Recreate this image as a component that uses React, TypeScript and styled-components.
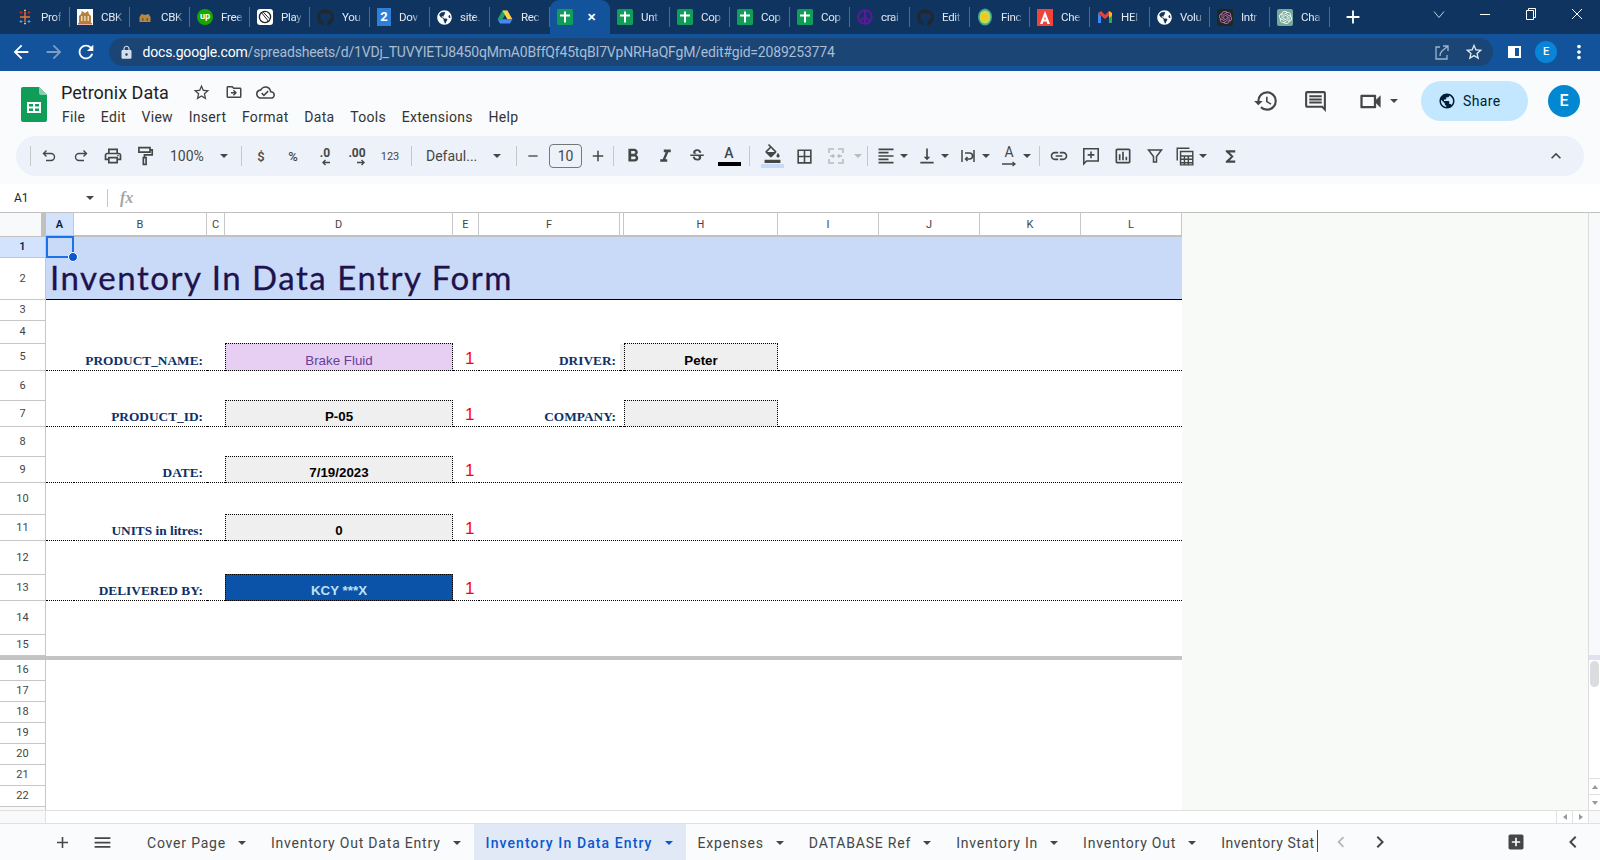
import React from 'react';
import styled, { createGlobalStyle } from 'styled-components';
import {
  MdAdd, MdAddBox, MdArrowBack, MdArrowForward, MdBorderAll, MdChevronLeft, MdChevronRight, MdExpandLess,
  MdFormatAlignLeft, MdFormatBold, MdFormatColorFill, MdFormatItalic, MdFunctions, MdHistory, MdLink, MdLock,
  MdMenu, MdMoreVert, MdOutlineCloudDone, MdOutlineComment,
  MdOutlineDriveFileMove, MdOutlineInsertChart, MdOutlinePrint,
  MdOutlineVideocam, MdPublic, MdRefresh, MdRemove, MdStarBorder, MdStrikethroughS,
  MdVerticalAlignBottom,
} from 'react-icons/md';
import { FaGithub, FaGlobeAmericas, FaPeace } from 'react-icons/fa';
import { SiOpenai } from 'react-icons/si';

const GlobalStyle = createGlobalStyle`
  html, body { margin: 0; padding: 0; overflow: hidden; background: #fff; }
  * { box-sizing: border-box; }
  body { font-family: Roboto, "Liberation Sans", sans-serif; }
`;

const browserTabs = [
  ['tableau', 'Prof'], ['crest', 'CBK'], ['crestDark', 'CBK'], ['upwork', 'Free'], ['play', 'Play'], ['github', 'You'],
  ['doc2', 'Dov'], ['globe', 'site.'], ['drive', 'Rec'], ['sheets', ''], ['sheets', 'Unt'], ['sheets', 'Cop'],
  ['sheets', 'Cop'], ['sheets', 'Cop'], ['peace', 'crai'], ['github', 'Edit'], ['find', 'Finc'], ['adobe', 'Che'],
  ['gmail', 'HEl'], ['globe', 'Volu'], ['aiDark', 'Intr'], ['aiTeal', 'Cha'],
];

const Favicon = ({ kind }: { kind: string }) => {
  switch (kind) {
    case 'tableau':
      return (
        <svg width="16" height="16" viewBox="0 0 16 16">
          <path d="M8 3v10M3 8h10" stroke="#e8762d" strokeWidth="1.400" />
          <path d="M4 2v3M2.500 3.500h3M12 2v3M10.500 3.500h3" stroke="#c72035" strokeWidth="1" />
          <path d="M4 11v3M2.500 12.500h3M12 11v3M10.500 12.500h3" stroke="#5b9bd5" strokeWidth="1" />
          <path d="M8 .5v2M7 1.500h2M8 13.500v2M7 14.500h2" stroke="#e9c46a" strokeWidth="1" />
        </svg>
      );
    case 'crest':
      return (
        <svg width="16" height="16" viewBox="0 0 16 16">
          <rect width="16" height="16" fill="#fff" />
          <path d="M2 14V7l2-2 1-3 3 2 3-2 1 3 2 2v7z" fill="#b5813f" />
          <path d="M4 7h1.500v5H4zM7.200 7h1.500v5H7.200zM10.500 7H12v5h-1.500z" fill="#e9d6b0" />
          <path d="M1 14h14v1.500H1z" fill="#d9342b" opacity=".8" />
        </svg>
      );
    case 'crestDark':
      return (
        <svg width="16" height="16" viewBox="0 0 16 16">
          <path d="M2.500 13V8l2-3 3.500 1 3.500-1 2 3v5z" fill="#b58a45" />
          <path d="M5 9h1.500v3H5zM9.500 9H11v3H9.500z" fill="#7c5a26" />
        </svg>
      );
    case 'upwork':
      return <UpBadge>up</UpBadge>;
    case 'play':
      return (
        <svg width="16" height="16" viewBox="0 0 16 16">
          <rect width="16" height="16" rx="3" fill="#fff" />
          <circle cx="8" cy="8" r="5.600" fill="none" stroke="#222" strokeWidth="1.300" />
          <path d="M4 3l8 10M6 2.800l6.500 7" stroke="#222" strokeWidth="1" />
        </svg>
      );
    case 'github':
      return <FaGithub size={17} color="#22272e" />;
    case 'doc2':
      return <DocBadge>2</DocBadge>;
    case 'globe':
      return <FaGlobeAmericas size={15} color="#fff" />;
    case 'drive':
      return (
        <svg width="16" height="16" viewBox="0 0 16 16">
          <path d="M5.500 1.500h5l-5 8.700H.6z" fill="#1fa463" />
          <path d="M10.500 1.500l4.900 8.700h-5L5.500 1.500z" fill="#ffd04b" />
          <path d="M.6 10.200h14.800L13 14.500H3z" fill="#4688f1" />
        </svg>
      );
    case 'sheets':
      return (
        <svg width="16" height="16" viewBox="0 0 16 16">
          <rect width="16" height="16" rx="1.500" fill="#0f9d58" />
          <path d="M7 2.500h2v3h4v2H9v6H7v-6H3v-2h4z" fill="#fff" />
        </svg>
      );
    case 'peace':
      return <FaPeace size={16} color="#5a189a" />;
    case 'find':
      return (
        <svg width="16" height="18" viewBox="0 0 16 18">
          <ellipse cx="8" cy="9" rx="7" ry="8.600" fill="#3fa796" />
          <ellipse cx="8" cy="9" rx="5.400" ry="6.600" fill="#c8d94a" />
          <circle cx="8" cy="9" r="3.200" fill="#f5c518" />
        </svg>
      );
    case 'adobe':
      return (
        <svg width="16" height="17" viewBox="0 0 16 17">
          <rect width="16" height="17" fill="#f0443a" />
          <path d="M8 2l5 13h-2.600l-.9-2.600H6.400L5.600 15H3zM7.100 10.400h1.800L8 7.600z" fill="#fff" />
        </svg>
      );
    case 'gmail':
      return (
        <svg width="16" height="14" viewBox="0 0 16 14">
          <path d="M1 3v10h3V6z" fill="#4285f4" />
          <path d="M15 3v10h-3V6z" fill="#34a853" />
          <path d="M1 3l3-2 4 4 4-4 3 2-7 6z" fill="#ea4335" />
          <path d="M12 1l3 2v3l-3 2z" fill="#fbbc05" />
        </svg>
      );
    case 'aiDark':
      return (
        <AiBadge $bg="#1b2a1e">
          <SiOpenai size={13} color="#c76fbf" />
        </AiBadge>
      );
    default:
      return (
        <AiBadge $bg="#74aa9c">
          <SiOpenai size={13} color="#fff" />
        </AiBadge>
      );
  }
};

const GridIcon = () => (
  <svg width="26" height="35" viewBox="0 0 26 35">
    <path d="M2 0h16l8 8v25a2 2 0 0 1-2 2H2a2 2 0 0 1-2-2V2a2 2 0 0 1 2-2z" fill="#0f9d58" />
    <path d="M18 0l8 8h-6a2 2 0 0 1-2-2z" fill="#87ceac" />
    <path d="M6 15h14v11H6zM8 17v2.500h4V17zm6 0v2.500h4V17zm-6 4.500V24h4v-2.500zm6 0V24h4v-2.500z" fill="#fff" fillRule="evenodd" />
  </svg>
);

const StrokeIcon = ({ size = 18, width = 1.500, color = '#444746', d }: { size?: number; width?: number; color?: string; d: string }) => (
  <svg width={size} height={size} viewBox="0 0 18 18" fill="none" stroke={color} strokeWidth={width}>
    <path d={d} />
  </svg>
);

const rowHeights = [21, 42, 21, 23, 27, 30, 26, 30, 26, 32, 26, 34, 26, 34, 21];
const lowerRows = [16, 17, 18, 19, 20, 21, 22];

type Tone = 'plain' | 'lilac' | 'blue';
type FormRow = {
  label: string;
  value: string;
  tone: Tone;
  side?: { label: string; value: string };
};

const formRows: Record<number, FormRow> = {
  5: { label: 'PRODUCT_NAME:', value: 'Brake Fluid', tone: 'lilac', side: { label: 'DRIVER:', value: 'Peter' } },
  7: { label: 'PRODUCT_ID:', value: 'P-05', tone: 'plain', side: { label: 'COMPANY:', value: '' } },
  9: { label: 'DATE:', value: '7/19/2023', tone: 'plain' },
  11: { label: 'UNITS in litres:', value: '0', tone: 'plain' },
  13: { label: 'DELIVERED BY:', value: 'KCY ***X', tone: 'blue' },
};

const columns = ['A', 'B', 'C', 'D', 'E', 'F', '', 'H', 'I', 'J', 'K', 'L'];
const sheetTabs = ['Cover Page', 'Inventory Out Data Entry', 'Inventory In Data Entry', 'Expenses', 'DATABASE Ref', 'Inventory In', 'Inventory Out'];

const App = () => {
  const renderRow = (n: number) => {
    const form = formRows[n];
    const selected = n === 1;
    return (
      <React.Fragment key={n}>
        <RowNum $active={selected}>{n}</RowNum>
        {n === 1 && (
          <>
            <Blank $fill="#c9daf8">
              <Selection>
                <Handle />
              </Selection>
            </Blank>
            <Blank $span={11} $fill="#c9daf8" />
          </>
        )}
        {n === 2 && <TitleCell>Inventory In Data Entry Form</TitleCell>}
        {form ? (
          <>
            <Blank $ruled />
            <LabelCell>{form.label}</LabelCell>
            <Blank $ruled />
            <ValueCell $tone={form.tone}>{form.value}</ValueCell>
            <FlagCell>1</FlagCell>
            {form.side ? (
              <>
                <LabelCell>{form.side.label}</LabelCell>
                <Blank $ruled $fill={n === 5 ? '#efefef' : undefined} />
                <ValueCell $tone="plain">{form.side.value}</ValueCell>
                <Blank $span={4} $ruled />
              </>
            ) : (
              <Blank $span={7} $ruled />
            )}
          </>
        ) : (
          n > 2 && <Blank $span={12} />
        )}
      </React.Fragment>
    );
  };

  return (
    <Page>
      <GlobalStyle />
      <TabStrip>
        {browserTabs.map(([kind, title], i) => (
          <BrowserTab key={i} $active={i === 9}>
            <Favicon kind={kind} />
            {i === 9 ? <TabClose>✕</TabClose> : <TabTitle>{title}</TabTitle>}
          </BrowserTab>
        ))}
        <NewTab>
          <MdAdd size={22} />
        </NewTab>
        <WindowControls>
          <WindowBtn>
            <svg width="12" height="12" viewBox="0 0 12 12"><path d="M1 3.500l5 6 5-6" fill="none" stroke="#c5d3e4" /></svg>
          </WindowBtn>
          <WindowBtn>
            <svg width="12" height="12" viewBox="0 0 12 12"><path d="M1 6.500h10" stroke="#fff" /></svg>
          </WindowBtn>
          <WindowBtn>
            <svg width="12" height="14" viewBox="0 0 12 14"><path d="M1.500 3.500h7v9h-7zM3.500 3.500v-2h7v9h-2" fill="none" stroke="#fff" /></svg>
          </WindowBtn>
          <WindowBtn>
            <svg width="12" height="12" viewBox="0 0 12 12"><path d="M1 1l10 10M11 1L1 11" stroke="#fff" /></svg>
          </WindowBtn>
        </WindowControls>
      </TabStrip>

      <AddressBar>
        <NavBtn><MdArrowBack size={22} color="#fff" /></NavBtn>
        <NavBtn><MdArrowForward size={22} color="#7f9cc2" /></NavBtn>
        <NavBtn><MdRefresh size={22} color="#fff" /></NavBtn>
        <Omnibox>
          <MdLock size={15} color="#d5dfea" />
          <UrlText>
            <b>docs.google.com</b>/spreadsheets/d/1VDj_TUVYIETJ8450qMmA0BffQf45tqBI7VpNRHaQFgM/edit#gid=2089253774
          </UrlText>
          <OmniIcons>
            <svg width="18" height="18" viewBox="0 0 18 18">
              <path d="M10 3h5v5M15 3l-6 5c-1.500 1.300-2 3-2 5M7 4H3v12h11v-4" fill="none" stroke="#9fb4cc" strokeWidth="1.300" />
            </svg>
            <MdStarBorder size={20} color="#dfe7f0" />
          </OmniIcons>
        </Omnibox>
        <PanelIcon />
        <MiniAvatar>E</MiniAvatar>
        <NavDots><MdMoreVert size={22} color="#fff" /></NavDots>
      </AddressBar>

      <SheetHeader>
        <LogoSlot><GridIcon /></LogoSlot>
        <TitleBlock>
          <TitleRow>
            <DocTitle>Petronix Data</DocTitle>
            <TitleIcon $first><MdStarBorder size={19} /></TitleIcon>
            <TitleIcon><MdOutlineDriveFileMove size={18} /></TitleIcon>
            <TitleIcon><MdOutlineCloudDone size={19} /></TitleIcon>
          </TitleRow>
          <MenuRow>
            {['File', 'Edit', 'View', 'Insert', 'Format', 'Data', 'Tools', 'Extensions', 'Help'].map((m) => (
              <span key={m}>{m}</span>
            ))}
          </MenuRow>
        </TitleBlock>
        <HeaderActions>
          <ActionIcon $w={34}><MdHistory size={26} /></ActionIcon>
          <ActionIcon $w={34} $ml={15}><MdOutlineComment size={25} /></ActionIcon>
          <ActionIcon $w={28} $ml={24}><MdOutlineVideocam size={27} /></ActionIcon>
          <SmallCaret $ml={6} />
          <ShareButton><MdPublic size={18} color="#001d35" />Share</ShareButton>
          <Avatar>E</Avatar>
        </HeaderActions>
      </SheetHeader>

      <ToolbarWrap>
        <Toolbar>
          <Sep $mr={2} />
          <ToolBtn><StrokeIcon d="M6.500 3.500L3.500 6.500l3 3M4 6.500h7a3.500 3.500 0 0 1 0 7H6" width={1.400} /></ToolBtn>
          <ToolBtn><StrokeIcon d="M11.500 3.500l3 3-3 3M14 6.500H7a3.500 3.500 0 0 0 0 7h5" width={1.400} /></ToolBtn>
          <ToolBtn><MdOutlinePrint size={20} /></ToolBtn>
          <ToolBtn><StrokeIcon size={20} d="M3.500 1.500h10v4h-10zM13.500 3.500h2v4.500H8.500v2.500M7.500 10.500h2.500v6H7.500z" /></ToolBtn>
          <ToolText $w={52}>100%</ToolText>
          <Caret $w={22} />
          <Sep $ml={6} $mr={3} />
          <ToolBtn><SymbolText>$</SymbolText></ToolBtn>
          <ToolBtn><SymbolText>%</SymbolText></ToolBtn>
          <ToolBtn>
            <DecimalIcon>.0<svg width="9" height="7" viewBox="0 0 9 7"><path d="M9 3.500H2M4.500 1L2 3.500 4.500 6" fill="none" stroke="#444746" strokeWidth="1.400" /></svg></DecimalIcon>
          </ToolBtn>
          <ToolBtn>
            <DecimalIcon>.00<svg width="9" height="7" viewBox="0 0 9 7"><path d="M0 3.500h7M4.500 1L7 3.500 4.500 6" fill="none" stroke="#444746" strokeWidth="1.400" /></svg></DecimalIcon>
          </ToolBtn>
          <ToolBtn $w={34}><SymbolText $small>123</SymbolText></ToolBtn>
          <Sep $ml={4} />
          <FontLabel>Defaul...</FontLabel>
          <Caret $w={20} />
          <Sep $ml={9} />
          <ToolBtn><MdRemove size={16} /></ToolBtn>
          <SizeBox>10</SizeBox>
          <ToolBtn $w={31}><MdAdd size={18} /></ToolBtn>
          <Sep $mr={3} />
          <ToolBtn><MdFormatBold size={22} /></ToolBtn>
          <ToolBtn><MdFormatItalic size={21} /></ToolBtn>
          <ToolBtn><MdStrikethroughS size={18} /></ToolBtn>
          <ToolBtn>
            <ColorStack><TextA>A</TextA><ColorBar $color="#000" /></ColorStack>
          </ToolBtn>
          <Sep $ml={4} $mr={6} />
          <ToolBtn>
            <ColorStack><MdFormatColorFill size={19} /><ColorBar $color="#c9daf8" /></ColorStack>
          </ToolBtn>
          <ToolBtn><MdBorderAll size={19} /></ToolBtn>
          <ToolBtn>
            <StrokeIcon color="#b8babc" d="M7 2H2v4M11 2h5v4M7 16H2v-4M11 16h5v-4M3 9h4M15 9h-4M5.500 7.500L7 9l-1.500 1.500M12.500 7.500L11 9l1.500 1.500" />
          </ToolBtn>
          <Caret $w={12} $dim />
          <Sep $ml={3} $mr={4} />
          <ToolBtn $w={28}><MdFormatAlignLeft size={20} /></ToolBtn>
          <Caret $w={8} />
          <ToolBtn $w={28} $ml={5}><MdVerticalAlignBottom size={20} /></ToolBtn>
          <Caret $w={8} />
          <ToolBtn $w={28} $ml={5}>
            <StrokeIcon d="M3 3v12M15 3v12M6 6h4.500a2.500 2.500 0 0 1 0 6H7M8.500 10L6.500 12l2 2" />
          </ToolBtn>
          <Caret $w={8} />
          <ToolBtn $w={28} $ml={5}>
            <ColorStack><TextA $thin>A</TextA>
              <svg width="16" height="6" viewBox="0 0 16 6"><path d="M1 3h13M11.500 1L14 3l-2.500 2" fill="none" stroke="#444746" strokeWidth="1.300" /></svg>
            </ColorStack>
          </ToolBtn>
          <Caret $w={8} />
          <Sep $ml={8} $mr={3} />
          <ToolBtn><MdLink size={20} /></ToolBtn>
          <ToolBtn><StrokeIcon size={20} width={1.400} d="M2.500 2.500h13v11H5l-2.500 2.500zM9 5v6M6 8h6" /></ToolBtn>
          <ToolBtn><MdOutlineInsertChart size={20} /></ToolBtn>
          <ToolBtn><StrokeIcon d="M2.500 3h13L10.500 9.500V15h-3V9.500z" /></ToolBtn>
          <ToolBtn $w={28}>
            <StrokeIcon size={20} width={1.300} d="M2 13V2h11M5 5h11v12H5zM5 9h11M5 12h11M5 15h11M8.500 9v8M12 9v8" />
          </ToolBtn>
          <Caret $w={8} />
          <ToolBtn $ml={7}><MdFunctions size={19} /></ToolBtn>
          <ToolBtn $ml="auto"><MdExpandLess size={20} /></ToolBtn>
        </Toolbar>
      </ToolbarWrap>

      <FormulaBar>
        <NameBox>A1</NameBox>
        <SmallCaret />
        <FormulaSep />
        <FxMark>fx</FxMark>
      </FormulaBar>

      <SheetArea>
        <Grid>
          <CornerCell />
          {columns.map((c, i) => (
            <ColHead key={i} $active={c === 'A'}>{c}</ColHead>
          ))}
          {rowHeights.map((_, i) => renderRow(i + 1))}
          <FreezeBar />
          {lowerRows.map(renderRow)}
          <RowNum $stub />
          <Blank $span={12} />
        </Grid>
        <EmptyPanel />
        <VScroll>
          <VTop />
          <VFreeze />
          <VTrack><VThumb /></VTrack>
          <VArrow><Tri $dir="up" /></VArrow>
          <VArrow><Tri $dir="down" /></VArrow>
        </VScroll>
      </SheetArea>

      <HScroll>
        <HLeft />
        <HArrow><Tri $dir="left" /></HArrow>
        <HArrow><Tri $dir="right" /></HArrow>
        <HCorner />
      </HScroll>

      <SheetTabBar>
        <TabIcon $ml={46}><MdAdd size={19} /></TabIcon>
        <TabIcon $ml={8}><MdMenu size={21} /></TabIcon>
        <SheetTabs>
          {sheetTabs.map((t, i) => (
            <SheetTab key={t} $active={i === 2}>
              {t}
              <TabCaret $active={i === 2} />
            </SheetTab>
          ))}
          <SheetTab $tight>Inventory Stat</SheetTab>
        </SheetTabs>
        <TabIcon $ml={7} $dim><MdChevronLeft size={22} /></TabIcon>
        <TabIcon $ml={7}><MdChevronRight size={24} /></TabIcon>
        <TabIcon $ml={104}><MdAddBox size={20} /></TabIcon>
        <TabIcon $ml={25}><MdChevronLeft size={24} /></TabIcon>
      </SheetTabBar>
    </Page>
  );
};

export default App;

const Page = styled.div`
  width: 1600px;
  height: 860px;
  display: flex;
  flex-direction: column;
  overflow: hidden;
`;

const TabStrip = styled.div`
  height: 34px;
  flex: none;
  display: flex;
  align-items: stretch;
  padding-left: 10px;
  background: #0f3460;
`;

const BrowserTab = styled.div<{ $active?: boolean }>`
  position: relative;
  width: 60px;
  flex: none;
  display: flex;
  align-items: center;
  gap: 8px;
  padding-left: 7px;
  background: ${({ $active }) => ($active ? '#12539b' : 'transparent')};
  border-radius: 9px 9px 0 0;
  &::after {
    content: '';
    position: absolute;
    right: 0;
    top: 7px;
    bottom: 7px;
    width: 1px;
    background: ${({ $active }) => ($active ? 'transparent' : '#4b6b90')};
  }
`;

const TabTitle = styled.span`
  white-space: nowrap;
  color: #e2eaf3;
  font-size: 11.500px;
  letter-spacing: -0.3px;
  -webkit-mask-image: linear-gradient(90deg, #000 70%, rgba(0, 0, 0, 0.3));
  mask-image: linear-gradient(90deg, #000 70%, rgba(0, 0, 0, 0.3));
`;

const TabClose = styled.span`
  margin-left: 6px;
  color: #fff;
  font-size: 11px;
  font-weight: 700;
`;

const UpBadge = styled.span`
  width: 16px;
  height: 16px;
  border-radius: 50%;
  background: #14a800;
  color: #fff;
  font-size: 9px;
  font-weight: 700;
  line-height: 15px;
  text-align: center;
`;

const DocBadge = styled.span`
  width: 14px;
  height: 18px;
  background: #2f7fd8;
  color: #fff;
  font-size: 13px;
  font-weight: 700;
  line-height: 18px;
  text-align: center;
`;

const AiBadge = styled.span<{ $bg: string }>`
  width: 16px;
  height: 17px;
  flex: none;
  display: flex;
  align-items: center;
  justify-content: center;
  border-radius: 2px;
  background: ${({ $bg }) => $bg};
`;

const NewTab = styled.div`
  width: 46px;
  display: flex;
  align-items: center;
  justify-content: center;
  color: #fff;
`;

const WindowControls = styled.div`
  margin-left: auto;
  display: flex;
`;

const WindowBtn = styled.div`
  width: 46px;
  height: 28px;
  display: flex;
  align-items: center;
  justify-content: center;
`;

const AddressBar = styled.div`
  height: 37px;
  flex: none;
  display: flex;
  align-items: center;
  padding: 0 0 1px 5px;
  background: #12539b;
`;

const NavBtn = styled.div`
  width: 32.500px;
  display: flex;
  justify-content: center;
`;

const Omnibox = styled.div`
  width: 1384px;
  height: 28px;
  margin-left: 6px;
  display: flex;
  align-items: center;
  padding: 0 9px 0 10px;
  border-radius: 14px;
  background: #1b4575;
`;

const UrlText = styled.div`
  margin-left: 9px;
  color: #a9bdd3;
  font-size: 14px;
  letter-spacing: -0.19px;
  white-space: nowrap;
  b {
    color: #fff;
    font-weight: 400;
  }
`;

const OmniIcons = styled.div`
  margin-left: auto;
  display: flex;
  align-items: center;
  gap: 13px;
`;

const PanelIcon = styled.div`
  width: 13px;
  height: 12px;
  margin-left: 15.500px;
  border: 2px solid #fff;
  border-left-width: 7px;
  background: #12539b;
`;

const MiniAvatar = styled.div`
  width: 22px;
  height: 22px;
  margin-left: 14px;
  border-radius: 50%;
  background: #0a84d6;
  color: #fff;
  font-size: 11px;
  font-weight: 500;
  line-height: 22px;
  text-align: center;
`;

const NavDots = styled.div`
  margin-left: 11px;
  display: flex;
`;

const SheetHeader = styled.div`
  height: 65px;
  flex: none;
  display: flex;
  padding-left: 21px;
  background: #f9fbfd;
`;

const LogoSlot = styled.div`
  padding-top: 16px;
`;

const TitleBlock = styled.div`
  margin-left: 14px;
  padding-top: 9px;
`;

const TitleRow = styled.div`
  height: 24px;
  display: flex;
  align-items: center;
`;

const DocTitle = styled.div`
  color: #1f1f1f;
  font-size: 18px;
`;

const TitleIcon = styled.div<{ $first?: boolean }>`
  width: 32px;
  margin-left: ${({ $first }) => ($first ? '17px' : '0')};
  display: flex;
  justify-content: center;
  color: #444746;
`;

const MenuRow = styled.div`
  margin-top: 2px;
  display: flex;
  gap: 15.700px;
  padding-left: 1px;
  color: #333;
  font-size: 14px;
  line-height: 22px;
  letter-spacing: 0.3px;
`;

const HeaderActions = styled.div`
  height: 50px;
  margin-left: auto;
  padding: 10px 20px 0 0;
  display: flex;
  align-items: center;
`;

const ActionIcon = styled.div<{ $w: number; $ml?: number }>`
  width: ${({ $w }) => $w}px;
  height: 40px;
  margin-left: ${({ $ml }) => $ml ?? 0}px;
  display: flex;
  align-items: center;
  justify-content: center;
  color: #444746;
`;

const SmallCaret = styled.span<{ $ml?: number }>`
  width: 0;
  height: 0;
  margin-left: ${({ $ml }) => $ml ?? 0}px;
  border-left: 4px solid transparent;
  border-right: 4px solid transparent;
  border-top: 4px solid #444746;
`;

const ShareButton = styled.div`
  width: 107px;
  height: 40px;
  margin-left: 23px;
  display: flex;
  align-items: center;
  gap: 7px;
  padding-left: 17px;
  border-radius: 20px;
  background: #c2e7ff;
  color: #001d35;
  font-size: 14px;
  letter-spacing: 0.4px;
`;

const Avatar = styled.div`
  width: 32px;
  height: 32px;
  margin-left: 20px;
  border-radius: 50%;
  background: #0288d1;
  color: #fff;
  font-size: 16px;
  font-weight: 500;
  line-height: 32px;
  text-align: center;
`;

const ToolbarWrap = styled.div`
  height: 48px;
  flex: none;
  padding: 0 16px;
  background: #f9fbfd;
`;

const Toolbar = styled.div`
  height: 40px;
  display: flex;
  align-items: center;
  padding: 0 12px 0 14px;
  border-radius: 20px;
  background: #edf2fa;
  color: #444746;
`;

const Sep = styled.span<{ $ml?: number; $mr?: number }>`
  width: 1px;
  height: 20px;
  flex: none;
  margin-left: ${({ $ml }) => $ml ?? 0}px;
  margin-right: ${({ $mr }) => $mr ?? 0}px;
  background: #c7c7c7;
`;

const ToolBtn = styled.div<{ $w?: number; $ml?: number | string }>`
  width: ${({ $w }) => $w ?? 32}px;
  height: 28px;
  flex: none;
  margin-left: ${({ $ml }) => (typeof $ml === 'string' ? $ml : `${$ml ?? 0}px`)};
  display: flex;
  align-items: center;
  justify-content: center;
`;

const ToolText = styled.div<{ $w: number }>`
  width: ${({ $w }) => $w}px;
  padding-left: 9px;
  font-size: 14px;
`;

const Caret = styled.span<{ $w: number; $dim?: boolean }>`
  width: ${({ $w }) => $w}px;
  flex: none;
  display: flex;
  justify-content: center;
  &::before {
    content: '';
    border-left: 4px solid transparent;
    border-right: 4px solid transparent;
    border-top: 4px solid ${({ $dim }) => ($dim ? '#b8babc' : '#444746')};
  }
`;

const SymbolText = styled.span<{ $small?: boolean }>`
  font-size: ${({ $small }) => ($small ? '11px' : '13px')};
  font-weight: ${({ $small }) => ($small ? 400 : 500)};
`;

const DecimalIcon = styled.span`
  display: flex;
  flex-direction: column;
  align-items: flex-end;
  font-size: 12px;
  font-weight: 700;
  line-height: 12px;
`;

const FontLabel = styled.div`
  width: 75px;
  padding-left: 14px;
  font-size: 14px;
  white-space: nowrap;
`;

const SizeBox = styled.div`
  width: 33px;
  height: 24px;
  flex: none;
  border: 1px solid #747775;
  border-radius: 4px;
  font-size: 14px;
  line-height: 22px;
  text-align: center;
`;

const ColorStack = styled.div`
  display: flex;
  flex-direction: column;
  align-items: center;
  gap: 1px;
`;

const TextA = styled.span<{ $thin?: boolean }>`
  font-size: 14px;
  font-weight: ${({ $thin }) => ($thin ? 400 : 500)};
  line-height: 15px;
`;

const ColorBar = styled.span<{ $color: string }>`
  width: 23px;
  height: 4px;
  background: ${({ $color }) => $color};
`;

const FormulaBar = styled.div`
  height: 28px;
  flex: none;
  display: flex;
  align-items: center;
  background: #fff;
`;

const NameBox = styled.div`
  width: 86px;
  padding-left: 14px;
  color: #1f1f1f;
  font-size: 12px;
`;

const FormulaSep = styled.span`
  width: 1px;
  height: 18px;
  margin-left: 13px;
  background: #c7c7c7;
`;

const FxMark = styled.span`
  margin-left: 12px;
  color: #a6a6a6;
  font-family: "Liberation Serif", serif;
  font-size: 16px;
  font-style: italic;
  font-weight: 700;
`;

const SheetArea = styled.div`
  height: 598px;
  flex: none;
  display: flex;
`;

const Grid = styled.div`
  width: 1182px;
  flex: none;
  display: grid;
  grid-template-columns: 46px 28px 133px 18px 228px 26px 141px 4px 154px 101px 101px 101px 101px;
  grid-template-rows: 25px ${rowHeights.map((h) => `${h}px`).join(' ')} 4px ${lowerRows.map(() => '21px').join(' ')} 3px;
`;

const CornerCell = styled.div`
  background: #f8f9fa;
  border-top: 1px solid #c0c0c0;
  border-bottom: 1px solid #c0c0c0;
  border-right: 5px solid #c0c0c0;
`;

const ColHead = styled.div<{ $active?: boolean }>`
  display: flex;
  align-items: center;
  justify-content: center;
  border-top: 1px solid #c0c0c0;
  border-bottom: 2px solid #c0c0c0;
  border-right: 1px solid #c7c7c7;
  background: ${({ $active }) => ($active ? '#d3e3fd' : '#fff')};
  color: ${({ $active }) => ($active ? '#041e49' : '#444')};
  font-size: 11px;
  font-weight: ${({ $active }) => ($active ? 600 : 400)};
`;

const RowNum = styled.div<{ $active?: boolean; $stub?: boolean }>`
  display: flex;
  align-items: center;
  justify-content: center;
  padding-bottom: 1px;
  border-right: 1px solid #c7c7c7;
  border-bottom: ${({ $stub }) => ($stub ? 0 : '1px solid #c7c7c7')};
  background: ${({ $active, $stub }) => ($active ? '#d3e3fd' : $stub ? '#f8f9fa' : '#fff')};
  color: ${({ $active }) => ($active ? '#041e49' : '#444')};
  font-size: 11px;
  font-weight: ${({ $active }) => ($active ? 600 : 400)};
`;

const Blank = styled.div<{ $span?: number; $fill?: string; $ruled?: boolean }>`
  position: relative;
  grid-column: span ${({ $span }) => $span ?? 1};
  background: ${({ $fill }) => $fill ?? '#fff'};
  border-bottom: ${({ $ruled }) => ($ruled ? '1px dotted #000' : '0')};
`;

const Selection = styled.div`
  position: absolute;
  inset: -1px 0 0 0;
  border: 2px solid #1a73e8;
  z-index: 2;
`;

const Handle = styled.span`
  position: absolute;
  right: -6px;
  bottom: -6px;
  width: 10px;
  height: 10px;
  border-radius: 50%;
  background: #0b57d0;
  border: 1px solid #fff;
`;

const TitleCell = styled.div`
  grid-column: span 12;
  display: flex;
  align-items: flex-end;
  padding: 0 0 3px 4px;
  border-bottom: 1px solid #000;
  background: #c9daf8;
  color: #20124d;
  font-family: Lato, "Noto Sans", sans-serif;
  font-size: 33px;
  line-height: 38px;
  letter-spacing: 1.530px;
  white-space: nowrap;
  -webkit-text-stroke: 0.3px #20124d;
`;

const LabelCell = styled.div`
  display: flex;
  align-items: flex-end;
  justify-content: flex-end;
  padding: 0 4px 2px 0;
  border-bottom: 1px dotted #000;
  color: #0d3068;
  font-family: "Liberation Serif", serif;
  font-size: 13.330px;
  font-weight: 700;
  line-height: 15px;
  white-space: nowrap;
`;

const toneStyles: Record<Tone, { bg: string; color: string; weight: number }> = {
  plain: { bg: '#efefef', color: '#000', weight: 700 },
  lilac: { bg: '#e6cff2', color: '#6a3d9a', weight: 400 },
  blue: { bg: '#0b53a8', color: '#bfe1f6', weight: 700 },
};

const ValueCell = styled.div<{ $tone: Tone }>`
  position: relative;
  z-index: 1;
  margin-top: -1px;
  display: flex;
  align-items: flex-end;
  justify-content: center;
  padding-bottom: 2px;
  border: 1px dotted #000;
  background: ${({ $tone }) => toneStyles[$tone].bg};
  color: ${({ $tone }) => toneStyles[$tone].color};
  font-family: "Liberation Sans", sans-serif;
  font-size: 13.330px;
  font-weight: ${({ $tone }) => toneStyles[$tone].weight};
  line-height: 15px;
`;

const FlagCell = styled.div`
  display: flex;
  align-items: flex-end;
  padding: 0 0 1px 12px;
  border-bottom: 1px dotted #000;
  color: #ff0000;
  font-family: "Liberation Sans", sans-serif;
  font-size: 17px;
  line-height: 21px;
`;

const FreezeBar = styled.div`
  grid-column: 1 / -1;
  background: #c4c4c4;
`;

const EmptyPanel = styled.div`
  flex: 1;
  background: #f8faf7;
  border-top: 1px solid #c0c0c0;
`;

const VScroll = styled.div`
  width: 12px;
  flex: none;
  display: flex;
  flex-direction: column;
  border-left: 1px solid #dadce0;
  border-top: 1px solid #c0c0c0;
  background: #fff;
`;

const VTop = styled.div`
  height: 442px;
  flex: none;
  background: #f8f9fa;
`;

const VFreeze = styled.div`
  height: 5px;
  flex: none;
  background: #e0e3ef;
`;

const VTrack = styled.div`
  flex: 1;
  padding: 1px;
`;

const VThumb = styled.div`
  height: 26px;
  border-radius: 5px;
  background: #dadce0;
`;

const VArrow = styled.div`
  height: 16px;
  flex: none;
  display: flex;
  align-items: center;
  justify-content: center;
  border-top: 1px solid #e0e0e0;
`;

const triBorders: Record<string, string> = {
  up: 'border-left: 3px solid transparent; border-right: 3px solid transparent; border-bottom: 4px solid #999;',
  down: 'border-left: 3px solid transparent; border-right: 3px solid transparent; border-top: 4px solid #999;',
  left: 'border-top: 3px solid transparent; border-bottom: 3px solid transparent; border-right: 4px solid #999;',
  right: 'border-top: 3px solid transparent; border-bottom: 3px solid transparent; border-left: 4px solid #999;',
};

const Tri = styled.span<{ $dir: string }>`
  width: 0;
  height: 0;
  ${({ $dir }) => triBorders[$dir]}
`;

const HScroll = styled.div`
  height: 13px;
  flex: none;
  display: flex;
  border-top: 1px solid #e0e0e0;
  background: #fff;
`;

const HLeft = styled.div`
  width: 46px;
  margin-right: auto;
  background: #f8f9fa;
  border-right: 1px solid #e0e0e0;
`;

const HArrow = styled.div`
  width: 16px;
  display: flex;
  align-items: center;
  justify-content: center;
  border-left: 1px solid #e0e0e0;
`;

const HCorner = styled.div`
  width: 12px;
  background: #f8f9fa;
  border-left: 1px solid #e0e0e0;
`;

const SheetTabBar = styled.div`
  height: 37px;
  flex: none;
  display: flex;
  align-items: center;
  border-top: 1px solid #e0e0e0;
  background: #f9fbfd;
`;

const TabIcon = styled.div<{ $ml: number; $dim?: boolean }>`
  width: 32px;
  margin-left: ${({ $ml }) => $ml}px;
  display: flex;
  justify-content: center;
  flex: none;
  color: ${({ $dim }) => ($dim ? '#b5b7b9' : '#444746')};
`;

const SheetTabs = styled.div`
  width: 1183px;
  height: 100%;
  flex: none;
  margin-left: 17px;
  display: flex;
  overflow: hidden;
  position: relative;
  &::after {
    content: '';
    position: absolute;
    right: 0;
    top: 6px;
    height: 22px;
    width: 1px;
    background: #444746;
  }
`;

const SheetTab = styled.div<{ $active?: boolean; $tight?: boolean }>`
  flex: none;
  display: flex;
  align-items: center;
  padding: ${({ $tight }) => ($tight ? '2px 0 0 12px' : '2px 12px 0')};
  background: ${({ $active }) => ($active ? '#e1e9f7' : 'transparent')};
  color: ${({ $active }) => ($active ? '#0b57d0' : '#444746')};
  font-size: 14px;
  font-weight: ${({ $active }) => ($active ? 500 : 400)};
  letter-spacing: ${({ $active, $tight }) => ($active ? '1.1px' : $tight ? '0.55px' : '0.8px')};
  white-space: nowrap;
`;

const TabCaret = styled.span<{ $active?: boolean }>`
  width: 0;
  height: 0;
  margin-left: 12px;
  margin-right: 1px;
  border-left: 4px solid transparent;
  border-right: 4px solid transparent;
  border-top: 4px solid ${({ $active }) => ($active ? '#0b57d0' : '#444746')};
`;
